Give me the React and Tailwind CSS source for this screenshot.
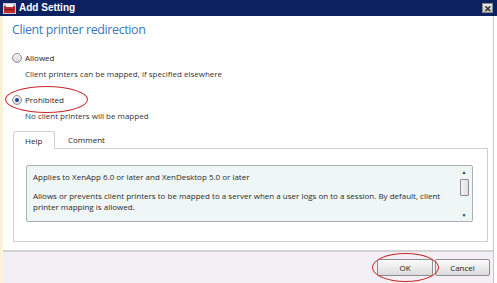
import React from 'react';

const Radio = ({ checked }) => (
  <span className="w-[10px] h-[10px] rounded-full border border-[#8e8f8f] bg-gradient-to-b from-[#f4f4f4] to-[#d9d9d9] flex items-center justify-center shrink-0">
    {checked && <span className="w-[4px] h-[4px] rounded-full bg-[#1f3f8a]" />}
  </span>
);

export default function App() {
  return (
    <div className="w-[497px] h-[283px] bg-white flex flex-col overflow-hidden relative font-['Open_Sans',sans-serif] text-[#1e1e1e]">
      {/* title bar */}
      <div className="h-[16px] bg-[#0b2160] flex items-center pl-[3px] pr-[4px] shrink-0">
        <svg width="13" height="11" viewBox="0 0 13 11" className="shrink-0">
          <rect x="0" y="0" width="13" height="11" fill="#c9ccd4" />
          <rect x="1" y="3" width="11" height="7" fill="#c42828" />
          <rect x="3" y="1" width="7" height="3" fill="#f2f2f2" />
          <rect x="2" y="6" width="9" height="1" fill="#7a1010" />
        </svg>
        <span className="ml-[3px] text-white text-[10px] font-bold leading-none font-['Liberation_Sans',sans-serif]">Add Setting</span>
        <div className="flex-1" />
        <span className="w-[11px] h-[10px] bg-gradient-to-b from-[#e9e9e9] to-[#c4c4c4] border border-[#8a8a8a] flex items-center justify-center text-[9px] font-bold leading-none text-[#222]">✕</span>
      </div>

      <div className="flex flex-1 min-h-0">
        <div className="w-[3px] bg-[#fcf3d6] shrink-0" />
        <div className="flex-1 flex flex-col">
          <div className="flex-1 flex flex-col pl-[9px] pr-[4px]">
            <h1 className="mt-[5px] text-[12.5px] leading-[18px] text-[#3a78c2] tracking-[-0.4px]">Client printer redirection</h1>

            <div className="mt-[14px] flex items-center gap-[3px] text-[8px] leading-[10px]">
              <Radio />
              <span>Allowed</span>
            </div>
            <div className="mt-[6px] ml-[13px] text-[8px] leading-[10px] text-[#333]">Client printers can be mapped, if specified elsewhere</div>

            <div className="mt-[16px] flex items-center gap-[3px] text-[8px] leading-[10px]">
              <Radio checked />
              <span>Prohibited</span>
            </div>
            <div className="mt-[6px] ml-[13px] text-[8px] leading-[10px] text-[#333]">No client printers will be mapped</div>

            {/* tabs */}
            <div className="mt-[9px] ml-[1px] mr-[1px] flex flex-col">
              <div className="flex items-end h-[18px]">
                <div className="w-[42px] h-[18px] border border-b-0 border-[#cfcfcf] rounded-t-[3px] bg-white text-[8px] flex items-center pl-[11px] relative top-[1px]">Help</div>
                <div className="ml-[13px] h-[17px] text-[8px] flex items-center">Comment</div>
              </div>
              <div className="h-[94px] border border-[#cfcfcf] pt-[16px] pl-[12px] pr-[14px] pb-[19px] flex">
                <div className="flex-1 border border-[#a9b0b4] rounded-[2px] bg-[#eef6f6] flex">
                  <div className="flex-1 pl-[6px] pt-[5px] text-[8px] leading-[11px] text-[#2a2a2a]">
                    <p>Applies to XenApp 6.0 or later and XenDesktop 5.0 or later</p>
                    <p className="mt-[8px]">Allows or prevents client printers to be mapped to a server when a user logs on to a session. By default, client printer mapping is allowed.</p>
                  </div>
                  <div className="w-[12px] mr-[2px] flex flex-col items-center py-[2px]">
                    <span className="text-[5px] leading-[8px] text-[#333]">▲</span>
                    <div className="w-[9px] h-[17px] mt-[3px] border border-[#8e8e8e] bg-gradient-to-r from-[#f4f4f4] to-[#dedede] rounded-[1px]" />
                    <div className="flex-1" />
                    <span className="text-[5px] leading-[8px] text-[#333]">▼</span>
                  </div>
                </div>
              </div>
            </div>
          </div>

          {/* footer */}
          <div className="h-[33px] shrink-0 border-t-2 border-[#d2d2d2] bg-[#f3f0f5] flex items-center justify-end pr-[3px] gap-[2px]">
            <button className="w-[56px] h-[17px] border border-[#8c8c8c] rounded-[2px] bg-gradient-to-b from-[#fbfbfb] to-[#dcdcdc] text-[8px] text-[#222]">OK</button>
            <button className="w-[55px] h-[17px] border border-[#8c8c8c] rounded-[2px] bg-gradient-to-b from-[#fbfbfb] to-[#dcdcdc] text-[8px] text-[#222]">Cancel</button>
          </div>
        </div>
        <div className="w-[1px] bg-[#c8c8c8] shrink-0" />
        <div className="w-[3px] bg-white shrink-0" />
      </div>

      {/* red annotation ellipses */}
      <div className="absolute left-[5px] top-[86px] w-[83px] h-[27px] rounded-[50%] border-[1.5px] border-[#c8282b]" />
      <div className="absolute left-[372px] top-[253px] w-[67px] h-[29px] rounded-[50%] border-[1.5px] border-[#c8282b]" />
    </div>
  );
}
